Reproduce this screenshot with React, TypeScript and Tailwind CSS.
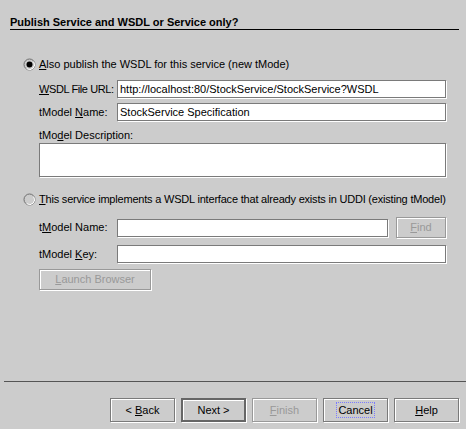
import React from 'react';

function Radio({ checked }: { checked?: boolean }) {
  return (
    <div className="w-[13px] h-[13px] shrink-0">
      <svg width="13" height="13" viewBox="0 0 13 13" className="block">
        <circle cx="6.5" cy="6.5" r="5.5" fill="#cccccc" stroke="#6f6f6f" strokeWidth="1" />
        <path d="M10.6 3.6 A5 5 0 0 1 3.6 10.6" fill="none" stroke="#ffffff" strokeWidth="1" />
        {checked && <circle cx="6.5" cy="6.5" r="3" fill="#000000" />}
      </svg>
    </div>
  );
}

function Field({ value = '', className = '' }: { value?: string; className?: string }) {
  return (
    <div
      className={`h-[18px] bg-white border border-[#7a7a7a] shadow-[1px_1px_0_#ffffff] flex items-center px-[2px] whitespace-nowrap overflow-hidden ${className}`}
    >
      {value}
    </div>
  );
}

type BtnProps = {
  children: React.ReactNode;
  disabled?: boolean;
  primary?: boolean;
  focused?: boolean;
  className?: string;
};

function Button({ children, disabled, primary, focused, className = '' }: BtnProps) {
  const border = disabled
    ? 'border border-[#999999] text-[#999999]'
    : primary
      ? 'border-2 border-[#666666] text-black'
      : 'border border-[#7a7a7a] text-black';
  return (
    <div
      className={`flex items-center justify-center whitespace-nowrap bg-[#cccccc] shadow-[inset_1px_1px_0_#ffffff,1px_1px_0_#ffffff] ${border} ${className}`}
    >
      {focused ? (
        <span className="border border-dotted border-[#7b7bff] px-[1px] leading-[14px]">{children}</span>
      ) : (
        children
      )}
    </div>
  );
}

function U({ children }: { children: React.ReactNode }) {
  return <span className="underline underline-offset-[1px]">{children}</span>;
}

export default function App() {
  return (
    <div className="w-[471px] h-[434px] bg-white font-['Liberation_Sans',Arial,sans-serif] text-[11px] text-black">
      <div className="w-[466px] h-[429px] bg-[#cccccc] flex flex-col">
        {/* header */}
        <div className="mx-[10px] w-[449px] pt-[15px] border-b border-black">
          <div className="font-bold leading-[14px] whitespace-nowrap">Publish Service and WSDL or Service only?</div>
        </div>

        {/* body */}
        <div className="pl-[23px] pr-[20px] flex flex-col">
          <div className="mt-[26px] h-[16px] flex items-center gap-[3px] whitespace-nowrap">
            <Radio checked />
            <span>
              <U>A</U>lso publish the WSDL for this service (new tMode)
            </span>
          </div>

          <div className="pl-[16px] flex flex-col">
            <div className="mt-[8px] flex items-center">
              <span className="w-[78px] shrink-0 whitespace-nowrap tracking-[-0.4px]">
                <U>W</U>SDL File URL:
              </span>
              <Field value="http://localhost:80/StockService/StockService?WSDL" className="flex-1" />
            </div>
            <div className="mt-[5px] flex items-center">
              <span className="w-[78px] shrink-0 whitespace-nowrap">
                tModel <U>N</U>ame:
              </span>
              <Field value="StockService Specification" className="flex-1" />
            </div>
            <div className="mt-[7px] h-[14px] flex items-center whitespace-nowrap">
              <span>
                tMo<U>d</U>el Description:
              </span>
            </div>
            <div className="mt-[1px] h-[34px] bg-white border border-[#7a7a7a] shadow-[1px_1px_0_#ffffff]" />
          </div>

          <div className="mt-[14px] h-[16px] flex items-center gap-[3px] whitespace-nowrap">
            <Radio />
            <span className="min-w-0 tracking-[-0.2px]">
              <U>T</U>his service implements a WSDL interface that already exists in UDDI (existing tModel)
            </span>
          </div>

          <div className="pl-[16px] flex flex-col">
            <div className="mt-[11px] h-[19px] flex items-center">
              <span className="w-[78px] shrink-0 whitespace-nowrap">
                t<U>M</U>odel Name:
              </span>
              <Field className="flex-1" />
              <Button disabled className="ml-[8px] w-[50px] h-[21px]">
                <span>
                  <U>F</U>ind
                </span>
              </Button>
            </div>
            <div className="mt-[8px] flex items-center">
              <span className="w-[78px] shrink-0 whitespace-nowrap">
                tModel <U>K</U>ey:
              </span>
              <Field className="flex-1" />
            </div>
            <div className="mt-[6px] flex">
              <Button disabled className="w-[112px] h-[21px]">
                <span>
                  <U>L</U>aunch Browser
                </span>
              </Button>
            </div>
          </div>
        </div>

        <div className="flex-1" />

        {/* footer */}
        <div className="ml-[4px] border-t border-[#555555]" />
        <div className="pt-[16px] pb-[7px] pr-[7px] flex justify-end gap-[6px]">
          <Button className="w-[65px] h-[24px]">
            <span>
              &lt; <U>B</U>ack
            </span>
          </Button>
          <Button primary className="w-[65px] h-[24px]">
            Next &gt;
          </Button>
          <Button disabled className="w-[65px] h-[24px]">
            <span>
              <U>F</U>inish
            </span>
          </Button>
          <Button focused className="w-[65px] h-[24px]">
            Cancel
          </Button>
          <Button className="w-[65px] h-[24px]">
            <span>
              <U>H</U>elp
            </span>
          </Button>
        </div>
      </div>
    </div>
  );
}
